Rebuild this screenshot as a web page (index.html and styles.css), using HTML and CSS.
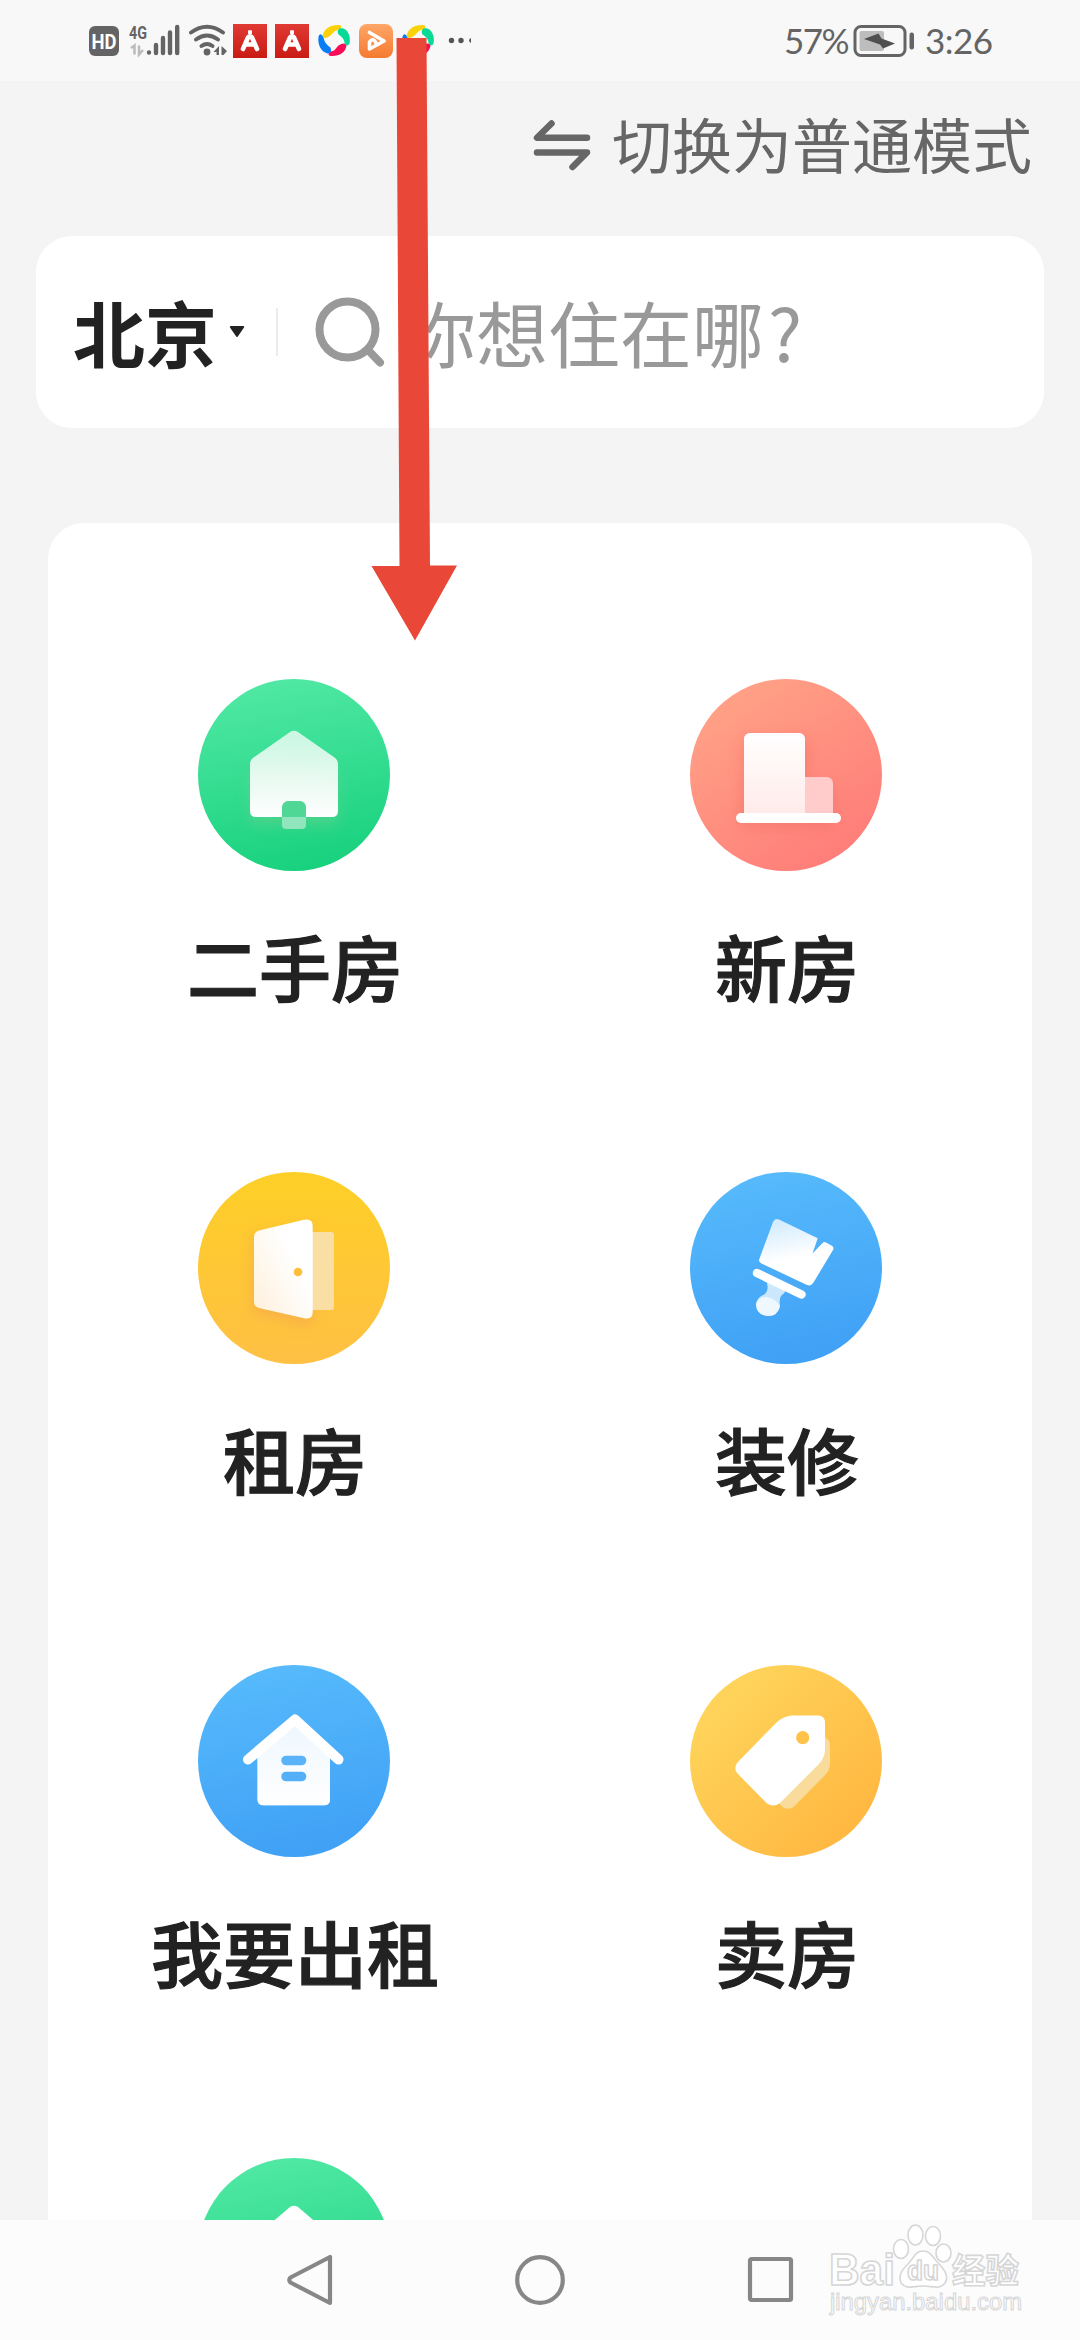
FILE: index.html
```html
<!DOCTYPE html>
<html lang="zh-CN">
<head>
<meta charset="utf-8">
<title>找房</title>
<link rel="stylesheet" href="styles.css">
</head>
<body>
<svg class="defs" width="0" height="0">
  <defs>
    <linearGradient id="green" x1=".4" y1="0" x2=".6" y2="1"><stop offset="0" stop-color="#50e8a4"/><stop offset="1" stop-color="#17d17d"/></linearGradient>
    <linearGradient id="coral" x1=".1" y1="0" x2=".8" y2="1"><stop offset="0" stop-color="#ffa588"/><stop offset="1" stop-color="#ff7b78"/></linearGradient>
    <linearGradient id="yellow" x1="0" y1="0" x2="0" y2="1"><stop offset="0" stop-color="#fdcf26"/><stop offset="1" stop-color="#ffc044"/></linearGradient>
    <linearGradient id="blue" x1=".4" y1="0" x2=".6" y2="1"><stop offset="0" stop-color="#56bafc"/><stop offset="1" stop-color="#3fa0f5"/></linearGradient>
    <linearGradient id="amber" x1=".1" y1=".1" x2=".9" y2=".9"><stop offset="0" stop-color="#ffd65c"/><stop offset="1" stop-color="#ffb640"/></linearGradient>
    <linearGradient id="fade-up" x1="0" y1="0" x2="0" y2="1"><stop offset="0" stop-color="#fff" stop-opacity=".72"/><stop offset="1" stop-color="#fff"/></linearGradient>
    <linearGradient id="fade-down" x1="0" y1="0" x2="0" y2="1"><stop offset="0" stop-color="#fff"/><stop offset="1" stop-color="#fff" stop-opacity=".4"/></linearGradient>
    <linearGradient id="fade-corner" x1=".7" y1=".4" x2="0" y2="1"><stop offset="0" stop-color="#fff"/><stop offset="1" stop-color="#fff" stop-opacity=".8"/></linearGradient>
    <linearGradient id="fade-brush" x1=".4" y1="0" x2=".6" y2=".8"><stop offset="0" stop-color="#fff" stop-opacity=".75"/><stop offset=".7" stop-color="#fff"/></linearGradient>
    <linearGradient id="app-red" x1="0" y1="0" x2="0" y2="1"><stop offset="0" stop-color="#e03a34"/><stop offset="1" stop-color="#c91b14"/></linearGradient>
    <linearGradient id="app-orange" x1="0" y1="0" x2="0" y2="1"><stop offset="0" stop-color="#ffa666"/><stop offset="1" stop-color="#f57a30"/></linearGradient>
    <filter id="glow" x="-30%" y="-30%" width="160%" height="160%"><feGaussianBlur stdDeviation="7"/></filter>
    <g id="pinwheel">
      <path d="M5 12C7 5 13 1 22 1.500Q26 3 22 6C18 6 15 10 13 12Q6 17 5 12Z" fill="#fbd107"/>
      <path d="M22 5C29 3 34 12 32 20Q30 24 27 20C27 16 25 14 21 11Q19 7 22 5Z" fill="#09d996"/>
      <path d="M29 22C28 29 22 33 13 32.500Q9 31 13 28C17 28 18 25 21 22Q27 18 29 22Z" fill="#fb0a55"/>
      <path d="M1 13C0 21 3 28 10 30Q15 30 13 24C9 21 7 19 6 14Q3 8 1 13Z" fill="#087cf5"/>
    </g>
    <g id="app-a">
      <rect width="34" height="34" fill="url(#app-red)"/>
      <rect x="15" y="6.200" width="4" height="4" rx="1" fill="#fff"/>
      <path d="M10 25L15 13.500Q17 11 19 13.500L24 25M14 20.500H20" fill="none" stroke="#fff" stroke-width="4.600" stroke-linecap="round"/>
    </g>
  </defs>
</svg>

<div class="screen">
  <header class="status">
    <svg class="status-icons" width="390" height="60" viewBox="85 10 390 60">
      <rect x="89" y="26" width="30" height="30" rx="6" fill="#646464"/>
      <text x="91.500" y="48.500" class="hd" textLength="25" lengthAdjust="spacingAndGlyphs">HD</text>
      <text x="129" y="38.500" class="net" textLength="18" lengthAdjust="spacingAndGlyphs">4G</text>
      <path d="M131 48L134.500 45.500V54.500M139 45.500V54.500L143 50" fill="none" stroke="#bbb" stroke-width="2.500"/>
      <g stroke="#646464" stroke-width="4.400" stroke-linecap="round">
        <path d="M149 52.500V52.600M156 45V53M163 38V53M170 32.500V53M177.200 27V53"/>
      </g>
      <g fill="none" stroke="#646464" stroke-width="4" stroke-linecap="round">
        <path d="M191 32.500Q207 21 223 32.500M196 39.500Q207 31.500 218 39.500M201.500 46Q207 42 212.500 46"/>
      </g>
      <circle cx="207" cy="52" r="3.400" fill="#646464"/>
      <path d="M213.500 52L219 46V55H216.500V52ZM221.500 46L227 51L223.500 55H221.500Z" fill="#646464"/>
      <use href="#app-a" x="233" y="24"/>
      <use href="#app-a" x="275" y="24"/>
      <use href="#pinwheel" x="317.500" y="23.500"/>
      <rect x="359" y="24" width="34" height="34" rx="8" fill="url(#app-orange)"/>
      <path d="M369.500 32.500L384 41L369.500 49V42Q373 37 376 43" fill="none" stroke="#fff" stroke-width="3.600" stroke-linejoin="round" stroke-linecap="round"/>
      <use href="#pinwheel" x="401.500" y="23.500"/>
      <circle cx="451.500" cy="40.500" r="2.700" fill="#555"/>
      <circle cx="461" cy="40.500" r="2.700" fill="#555"/>
      <path d="M471 38A2.600 2.600 0 0 0 471 43Z" fill="#555"/>
    </svg>
    <div class="status-right">
      <span class="battery-level">57%</span>
      <svg class="battery" width="62" height="34" viewBox="0 0 62 34">
        <rect x="2" y="2.500" width="50" height="29" rx="6" fill="none" stroke="#646464" stroke-width="3"/>
        <rect x="6.500" y="7" width="24.500" height="20" rx="2" fill="#bdbdbd"/>
        <path d="M11 15L25.500 9.500L28.500 14.500L42 19.500L30 24.500L27 20.500Z" fill="#505050"/>
        <rect x="56.500" y="8.500" width="4.500" height="17" rx="2.200" fill="#646464"/>
      </svg>
      <span class="clock">3:26</span>
    </div>
  </header>

  <div class="mode">
    <svg width="60" height="54" viewBox="0 0 60 54">
      <path d="M19.500 5.500L5 19.700H55M5 34.500H55L40.500 49" fill="none" stroke="#666" stroke-width="6.500" stroke-linecap="round" stroke-linejoin="round"/>
    </svg>
    <span>切换为普通模式</span>
  </div>

  <div class="search">
    <span class="city">北京</span>
    <svg class="caret" width="16" height="12" viewBox="0 0 16 12"><path d="M1.800 1H14.200L8 10Z" fill="#222" stroke="#222" stroke-width="2" stroke-linejoin="round"/></svg>
    <span class="divider"></span>
    <svg class="lens" width="72" height="72" viewBox="0 0 72 72"><circle cx="33.500" cy="33.500" r="28" fill="none" stroke="#999" stroke-width="8"/><path d="M54 54L66 66.500" stroke="#999" stroke-width="8" stroke-linecap="round"/></svg>
    <span class="placeholder">你想住在哪<span class="mark">?</span></span>
  </div>

  <main class="menu">
    <div class="item">
      <svg class="icon" viewBox="0 0 192 192">
        <circle cx="96" cy="96" r="96" fill="url(#green)"/>
        <path d="M52 90H140V146H52Z" fill="#6ed08e" opacity=".5" filter="url(#glow)"/>
        <path d="M92 53Q96 50.500 100 53L136.500 78.500Q140 81 140 85V132Q140 138 134 138H108V129.500Q108 122 100.500 122H91.500Q84 122 84 129.500V138H58Q52 138 52 132V85Q52 81 55.500 78.500Z" fill="url(#fade-up)"/>
        <path d="M84 138H108V146Q108 150 104 150H88Q84 150 84 146Z" fill="#91e5bd"/>
        <path d="M84 138V129.500Q84 122 91.500 122H100.500Q108 122 108 129.500V138Z" fill="#4ed795"/>
      </svg>
      <span class="label">二手房</span>
    </div>
    <div class="item">
      <svg class="icon" viewBox="0 0 192 192">
        <circle cx="96" cy="96" r="96" fill="url(#coral)"/>
        <path d="M54 60H118V106H143V148H50Z" fill="#ec6a61" opacity=".45" filter="url(#glow)"/>
        <path d="M114 98H136Q143 98 143 105V135H114Z" fill="#ffcbcb"/>
        <path d="M54 135V61Q54 54 61 54H108Q115 54 115 61V135Z" fill="#ffdedb"/>
        <path d="M54 135V61Q54 54 61 54H108Q115 54 115 61V135Z" fill="url(#fade-down)"/>
        <rect x="46" y="134" width="105" height="10" rx="5" fill="#fff"/>
      </svg>
      <span class="label">新房</span>
    </div>
    <div class="item">
      <svg class="icon" viewBox="0 0 192 192">
        <circle cx="96" cy="96" r="96" fill="url(#yellow)"/>
        <path d="M55 64L114 54V154L55 140Z" fill="#f4a450" opacity=".65" filter="url(#glow)"/>
        <path d="M112 60H133Q136 60 136 63V135Q136 138 133 138H112Z" fill="#fadfa5"/>
        <path d="M61 58.500L106 47.800Q114.700 46 114.700 54V140Q114.700 148 106 146.200L61 136Q56 134.500 56 130V65Q56 60 61 58.500Z" fill="url(#fade-corner)"/>
        <circle cx="100" cy="100" r="4.300" fill="#fdbf38"/>
      </svg>
      <span class="label">租房</span>
    </div>
    <div class="item">
      <svg class="icon" viewBox="0 0 192 192">
        <circle cx="96" cy="96" r="96" fill="url(#blue)"/>
        <path d="M89 47.500L127.700 66.300L122.500 81.500L132.500 71Q134 69.500 136 70.500L141.500 73.500Q144.500 75 143 78L123.500 110.500Q121 114.500 117 113L71.500 91.500Q68 90 69.500 86.500L83 50Q85 45.500 89 47.500Z" fill="url(#fade-brush)"/>
        <path d="M78 110L96 118Q95 121 91 124Q89 127 90 134Q88 144 78 144Q66 143 66 132Q67 125 75 122Q79 118 77 112Z" fill="#fff" fill-opacity=".72"/>
        <path d="M66 132Q68 125 77 125Q86 127 90 134Q88 144 78 144Q66 143 66 132Z" fill="#fff" opacity=".7"/>
        <path d="M67 101L111.500 122.500" stroke="#fff" stroke-width="8.500" stroke-linecap="round"/>
      </svg>
      <span class="label">装修</span>
    </div>
    <div class="item">
      <svg class="icon" viewBox="0 0 192 192">
        <circle cx="96" cy="96" r="96" fill="url(#blue)"/>
        <path d="M96.500 60L132 90V134.500Q132 140.300 126 140.300H65.500Q59.500 140.300 59.500 134.500V90Z" fill="#c4e3fd"/>
        <path d="M96.500 60L132 90V134.500Q132 140.300 126 140.300H65.500Q59.500 140.300 59.500 134.500V90Z" fill="url(#fade-up)"/>
        <path d="M50 94.500L97 54.500L140.500 94.500" fill="none" stroke="#fff" stroke-width="10" stroke-linecap="round" stroke-linejoin="round"/>
        <rect x="83.300" y="90.700" width="25" height="9.600" rx="4.800" fill="#58b3f8"/>
        <rect x="83.300" y="106.700" width="25" height="9.600" rx="4.800" fill="#54aff7"/>
      </svg>
      <span class="label">我要出租</span>
    </div>
    <div class="item">
      <svg class="icon" viewBox="0 0 192 192">
        <circle cx="96" cy="96" r="96" fill="url(#amber)"/>
        <path d="M135 72Q140 75 140 80V98Q140 105 135 110L104 141.500Q98 146 92 141.500L88 137Z" fill="#f9dc9b"/>
        <path d="M102 50.500H128Q135 50.500 135 58V84Q135 93 128.500 99.500L90 138Q83 143 76.500 138L47.500 108.500Q43 103 47.500 97.500L86 58Q93 51 102 50.500Z" fill="#fff"/>
        <circle cx="112.700" cy="72.700" r="6.600" fill="#ffc24b"/>
      </svg>
      <span class="label">卖房</span>
    </div>
    <div class="item">
      <svg class="icon" viewBox="0 0 192 192">
        <circle cx="96" cy="96" r="96" fill="url(#green)"/>
        <path d="M92 49Q96 46.500 100 49L141 84V135H51V84Z" fill="#fff"/>
      </svg>
    </div>
  </main>

  <nav class="navbar">
    <svg width="50" height="54" viewBox="0 0 50 54"><path d="M45 4V50L5.500 29.500Q3 27 5.500 24.500Z" fill="none" stroke="#878787" stroke-width="4.200" stroke-linejoin="round"/></svg>
    <svg width="54" height="54" viewBox="0 0 54 54"><circle cx="27" cy="27" r="22.800" fill="none" stroke="#878787" stroke-width="4.200"/></svg>
    <svg width="50" height="54" viewBox="0 0 50 54"><rect x="5" y="6" width="41" height="41" rx="1.500" fill="none" stroke="#878787" stroke-width="4.200"/></svg>
  </nav>

  <svg class="watermark" width="200" height="100" viewBox="0 0 200 100">
    <g fill="#fff" stroke="#d6d6d6" stroke-width="1.600">
      <ellipse cx="75" cy="28" rx="7.500" ry="9.500"/>
      <ellipse cx="89.500" cy="14" rx="7.500" ry="10"/>
      <ellipse cx="107" cy="15" rx="7.500" ry="9.500"/>
      <ellipse cx="117.500" cy="32" rx="7.500" ry="9"/>
      <path d="M97 30C105 30 107 37 113 43C120 50 123 56 119 62C114 69 107 65 97 65C87 65 81 69 75 62C72 54 76 49 82 43C88 37 89 30 97 30Z"/>
      <text class="wm-bai" x="3" y="64" textLength="66" lengthAdjust="spacingAndGlyphs">Bai</text>
      <text class="wm-du" x="81" y="59" textLength="32" lengthAdjust="spacingAndGlyphs">du</text>
      <text class="wm-cn" x="126" y="62" textLength="67" lengthAdjust="spacingAndGlyphs">经验</text>
    </g>
    <text class="wm-url" x="4" y="89" textLength="192" lengthAdjust="spacingAndGlyphs">jingyan.baidu.com</text>
  </svg>

  <svg class="pointer" width="90" height="604" viewBox="0 0 90 604">
    <path d="M26.500 0L56.500 0L60 527.500H87L45 602.500L1.500 528H29.500Z" fill="#e94738"/>
  </svg>
</div>
</body>
</html>
```
FILE: styles.css
```css
* { box-sizing: border-box; }

body {
  margin: 0;
  font-family: "Noto Sans CJK SC", "Noto Sans", sans-serif;
}

.defs { position: absolute; }

.screen {
  position: relative;
  display: flex;
  flex-direction: column;
  width: 1080px;
  height: 2340px;
  overflow: hidden;
  background: #f4f4f4;
}

.screen svg { flex: none; display: block; }

.status {
  display: flex;
  justify-content: space-between;
  flex: none;
  height: 81px;
  padding: 10px 88px 0 85px;
  background: #f8f8f8;
}

.hd { font: bold 21px Roboto, sans-serif; fill: #fff; }
.net { font: bold 18px Roboto, sans-serif; fill: #646464; }

.status-right {
  display: flex;
  align-items: center;
  height: 62px;
  color: #646464;
  font: 35px/60px Lato, sans-serif;
}

.battery-level { width: 69px; height: 62px; letter-spacing: -1.5px; }
.battery { margin-right: 10px; }
.clock { width: 67px; height: 62px; letter-spacing: -0.5px; }

.mode {
  display: flex;
  align-items: center;
  justify-content: flex-end;
  gap: 20px;
  flex: none;
  height: 131px;
  padding: 0 48px 4px 0;
  color: #666;
  font-size: 60px;
  line-height: 88px;
}

.mode span { padding-bottom: 3px; }

.search {
  display: flex;
  align-items: center;
  flex: none;
  height: 192px;
  margin: 24px 36px 0;
  padding-left: 37px;
  border-radius: 36px;
  background: #fff;
  font-size: 72px;
  line-height: 104px;
}

.city { padding-bottom: 2px; color: #222; font-weight: 700; }
.caret { margin-left: 12px; }
.divider { width: 2px; height: 48px; margin-left: 31px; background: #ececec; }
.lens { margin-left: 36px; }
.placeholder { margin-left: 18px; padding-bottom: 2px; color: #999; }
.mark { margin-left: 4px; }

.menu {
  display: grid;
  grid-template-columns: 492px 492px;
  grid-auto-rows: 493px;
  flex: 1;
  min-height: 0;
  margin: 95px 48px 0;
  padding-top: 156px;
  overflow: hidden;
  border-radius: 36px 36px 0 0;
  background: #fff;
}

.item { display: flex; flex-direction: column; align-items: center; }
.icon { width: 192px; height: 192px; }

.label {
  margin-top: 42px;
  padding-left: 2px;
  color: #222;
  font-size: 72px;
  font-weight: 500;
  line-height: 104px;
  -webkit-text-stroke: 1.2px #222;
}

.navbar {
  display: flex;
  align-items: center;
  justify-content: space-between;
  flex: none;
  height: 120px;
  padding: 0 285px 0 285px;
  background: #fcfcfc;
}

.watermark { position: absolute; left: 826px; top: 2221px; }
.wm-bai { font: bold 44px "Liberation Sans", sans-serif; }
.wm-du { font: bold 27px "Liberation Sans", sans-serif; }
.wm-cn { font-weight: 700; font-size: 34px; }
.wm-url { font: 24px "Liberation Sans", sans-serif; fill: #fff; stroke: #d6d6d6; stroke-width: 1; }

.pointer { position: absolute; left: 370px; top: 38px; }
```
